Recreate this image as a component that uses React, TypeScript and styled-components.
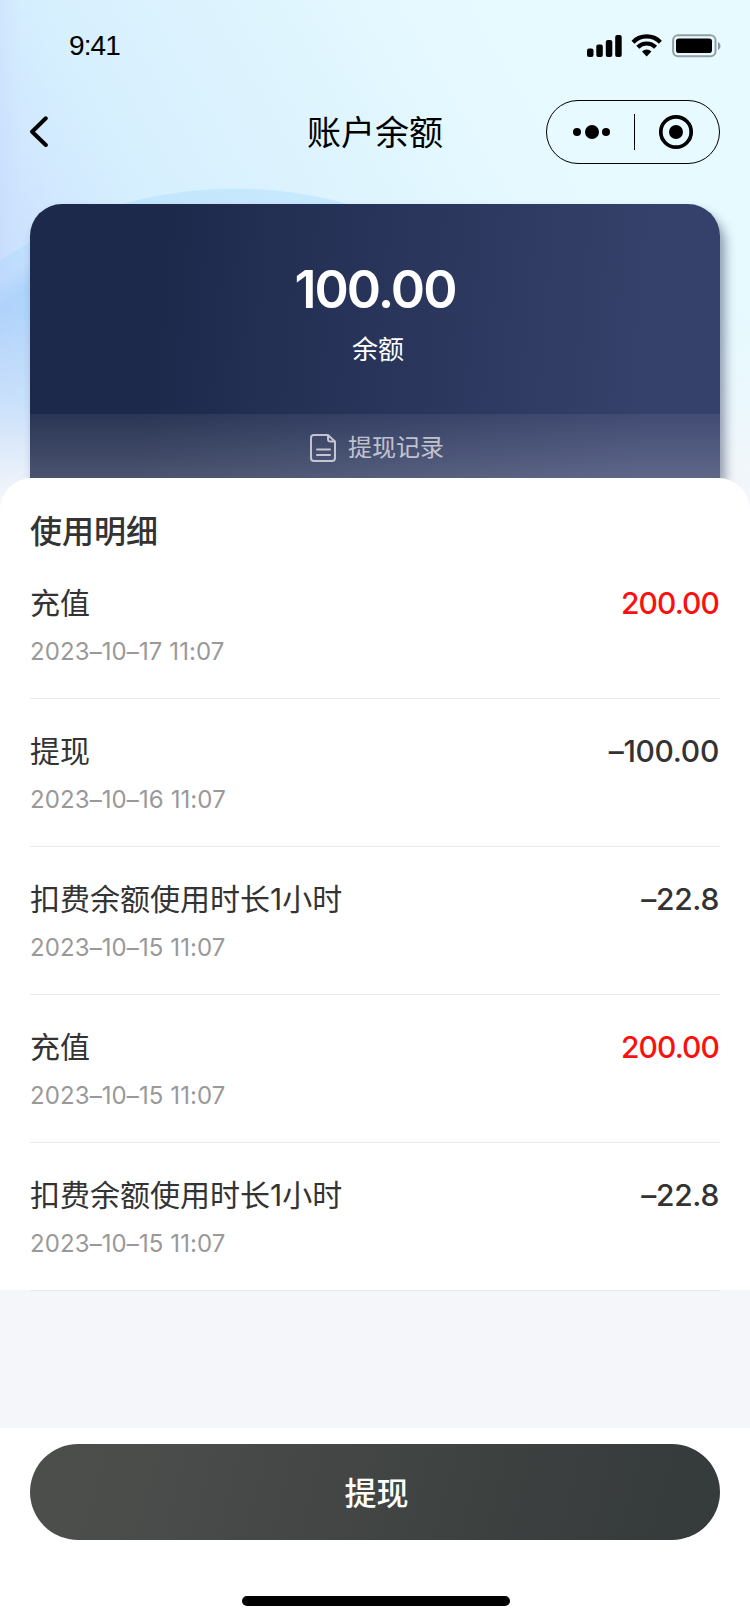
import React from "react";
import styled, { createGlobalStyle } from "styled-components";

const GlobalStyle = createGlobalStyle`
  * { box-sizing: border-box; }
  body {
    margin: 0;
    background: #f4f6fa;
    font-family: Inter, "Noto Sans CJK SC", sans-serif;
    color: #333;
  }
`;

const Screen = styled.div`
  width: 750px;
  height: 1624px;
  display: flex;
  flex-direction: column;
  overflow: hidden;
  background:
    linear-gradient(180deg, rgba(244, 246, 250, 0) 310px, rgba(244, 246, 250, 0.35) 400px, #f4f6fa 500px) 0 0 / 750px 500px no-repeat,
    linear-gradient(90deg, rgba(190, 205, 250, 0.22) 0, rgba(200, 220, 254, 0.05) 20px, rgba(200, 225, 255, 0) 60px) 0 0 / 750px 500px no-repeat,
    radial-gradient(circle 421px at 235px 609px, rgba(160, 206, 250, 0.6) 75%, rgba(158, 205, 249, 0.65) 91%, rgba(172, 216, 252, 0.42) 96%, rgba(165, 217, 255, 0.38) 99.7%, rgba(176, 220, 255, 0) 100%) 0 0 / 360px 500px no-repeat,
    linear-gradient(60deg, #c9defd 60px, #cee4fe 160px, #d6effe 270px, #dff5fe 480px, #e7faff 660px) 0 0 / 750px 500px no-repeat,
    #f4f6fa;
`;

const StatusBar = styled.header`
  height: 88px;
  padding: 4px 29px 0 69px;
  display: flex;
  align-items: center;
  justify-content: space-between;
  color: #000;
`;

const Clock = styled.time`
  font: 28px/32px "Liberation Sans", sans-serif;
  letter-spacing: -0.9px;
`;

const NavBar = styled.nav`
  height: 116px;
  padding: 12px 30px 40px;
  display: grid;
  grid-template-columns: 174px 1fr 174px;
  align-items: center;
  color: #000;
`;

const BackButton = styled.button`
  justify-self: start;
  display: flex;
  padding: 0;
  border: 0;
  background: none;
`;

const PageTitle = styled.h1`
  margin: 0;
  padding-top: 1px;
  text-align: center;
  font-size: 34px;
  line-height: 48px;
  font-weight: 400;
`;

const Capsule = styled.div`
  height: 64px;
  border: 1px solid #000;
  border-radius: 32px;
  display: flex;
`;

const BalanceCard = styled.section`
  height: 274px;
  flex: none;
  margin: 0 30px;
  border-radius: 32px 32px 0 0;
  background: linear-gradient(95deg, #1d294b 18%, #36416b 88%);
  box-shadow: 5px 8px 11px rgba(29, 41, 75, 0.45);
  display: flex;
  flex-direction: column;
  color: #fff;
`;

const BalanceInfo = styled.div`
  height: 210px;
  padding-top: 55px;
  display: flex;
  flex-direction: column;
  align-items: center;
`;

const Balance = styled.strong`
  font-size: 52px;
  line-height: 62px;
  font-weight: 600;
  letter-spacing: -2px;
`;

const BalanceLabel = styled.span`
  margin-top: 10px;
  padding-left: 6px;
  font-size: 26px;
  line-height: 38px;
`;

const RecordsLink = styled.a`
  height: 64px;
  padding-left: 3px;
  display: flex;
  align-items: center;
  justify-content: center;
  gap: 11px;
  background: linear-gradient(180deg, rgba(255, 255, 255, 0.06), rgba(255, 255, 255, 0.2));
  color: rgba(255, 255, 255, 0.68);
  font-size: 24px;

  svg {
    margin-top: 4px;
  }

  span {
    margin-top: -1px;
  }
`;

const Sheet = styled.main`
  height: 813px;
  flex: none;
  padding: 0 30px;
  position: relative;
  border-radius: 32px 32px 0 0;
  background: linear-gradient(#fff 812px, transparent 812px);
`;

const SectionTitle = styled.h2`
  margin: 0;
  padding-top: 31px;
  height: 73px;
  font-size: 32px;
  line-height: 46px;
  font-weight: 500;
`;

const Row = styled.article`
  height: 148px;
  padding-top: 30px;
  border-bottom: 1px solid #ebebeb;
  display: flex;
  justify-content: space-between;
`;

const RowTitle = styled.div`
  font-size: 30px;
  line-height: 44px;
`;

const RowDate = styled.time`
  display: block;
  margin-top: 9px;
  font-size: 24px;
  line-height: 36px;
  letter-spacing: 0.1px;
  color: #999;
`;

const Amount = styled.span<{ $income: boolean }>`
  padding-right: 1px;
  font-size: 30px;
  line-height: 44px;
  font-weight: 500;
  letter-spacing: ${({ $income }) => ($income ? "-0.9px" : "-0.3px")};
  color: ${({ $income }) => ($income ? "#fb0f0f" : "#333")};
`;

const Footer = styled.footer`
  margin-top: auto;
  height: 196px;
  padding: 16px 30px 18px;
  display: flex;
  flex-direction: column;
  justify-content: space-between;
  background: #fff;
`;

const WithdrawButton = styled.button`
  height: 96px;
  padding: 3px 0 0 3px;
  border: 0;
  border-radius: 48px;
  background: linear-gradient(105deg, #4c4e4c 10%, #363b3b 92%);
  color: #fff;
  font: 500 32px/48px Inter, "Noto Sans CJK SC", sans-serif;
`;

const HomeIndicator = styled.div`
  width: 268px;
  height: 10px;
  margin-left: 212px;
  border-radius: 5px;
  background: #000;
`;

const records = [
  { title: "充值", date: "2023–10–17 11:07", amount: "200.00", income: true },
  { title: "提现", date: "2023–10–16 11:07", amount: "–100.00", income: false },
  { title: "扣费余额使用时长1小时", date: "2023–10–15 11:07", amount: "–22.8", income: false },
  { title: "充值", date: "2023–10–15 11:07", amount: "200.00", income: true },
  { title: "扣费余额使用时长1小时", date: "2023–10–15 11:07", amount: "–22.8", income: false },
];

const StatusIcons = () => (
  <svg width="134" height="24" viewBox="0 0 134 24">
    <rect x="0" y="14.5" width="6.5" height="8.5" rx="2" />
    <rect x="9.3" y="10.5" width="6.5" height="12.5" rx="2" />
    <rect x="18.8" y="6" width="6.5" height="17" rx="2" />
    <rect x="28.2" y="1" width="6.5" height="22" rx="2" />
    <g fill="none" stroke="#000" strokeWidth="4.2">
      <path d="M46 8.2a19.2 19.2 0 0 1 27.4 0" />
      <path d="M50.8 13.2a12.6 12.6 0 0 1 17.8 0" />
    </g>
    <path d="M55 17.5a6.8 6.8 0 0 1 9.4 0l-4.7 5z" />
    <rect x="86.1" y="1.3" width="42.4" height="21" rx="5" fill="none" stroke="#000" strokeOpacity=".36" strokeWidth="2" />
    <rect x="89" y="4.5" width="36" height="14.5" rx="2.8" />
    <path d="M131 8v8c3.3-1.4 3.3-6.6 0-8z" opacity=".4" />
  </svg>
);

export default function App() {
  return (
    <>
      <GlobalStyle />
      <Screen>
        <StatusBar>
          <Clock>9:41</Clock>
          <StatusIcons />
        </StatusBar>
        <NavBar>
          <BackButton aria-label="返回">
            <svg width="20" height="32" viewBox="0 0 20 32" fill="none" stroke="#000" strokeWidth="4" strokeLinecap="round" strokeLinejoin="round">
              <path d="M15.8 2.3 2.1 15.7 15.8 29" />
            </svg>
          </BackButton>
          <PageTitle>账户余额</PageTitle>
          <Capsule>
            <svg width="172" height="62" viewBox="0 0 172 62">
              <circle cx="30" cy="31" r="4" />
              <circle cx="45" cy="31" r="7" />
              <circle cx="59" cy="31" r="4" />
              <path d="M87.5 13v36" stroke="#000" />
              <circle cx="129" cy="31" r="15.2" fill="none" stroke="#000" strokeWidth="3.7" />
              <circle cx="129" cy="31" r="7" />
            </svg>
          </Capsule>
        </NavBar>
        <BalanceCard>
          <BalanceInfo>
            <Balance>100.00</Balance>
            <BalanceLabel>余额</BalanceLabel>
          </BalanceInfo>
          <RecordsLink>
            <svg width="28" height="30" viewBox="0 0 28 30" fill="none" stroke="currentColor" strokeWidth="2" strokeLinejoin="round" strokeLinecap="round">
              <path d="M19 2H5a3 3 0 0 0-3 3v20a3 3 0 0 0 3 3h18a3 3 0 0 0 3-3V8.5L19 2v4a2.5 2.5 0 0 0 2.5 2.5H26M8 16.5h13M8 22h13" />
            </svg>
            <span>提现记录</span>
          </RecordsLink>
        </BalanceCard>
        <Sheet>
          <SectionTitle>使用明细</SectionTitle>
          {records.map((r, i) => (
            <Row key={i}>
              <div>
                <RowTitle>{r.title}</RowTitle>
                <RowDate>{r.date}</RowDate>
              </div>
              <Amount $income={r.income}>{r.amount}</Amount>
            </Row>
          ))}
        </Sheet>
        <Footer>
          <WithdrawButton>提现</WithdrawButton>
          <HomeIndicator />
        </Footer>
      </Screen>
    </>
  );
}
